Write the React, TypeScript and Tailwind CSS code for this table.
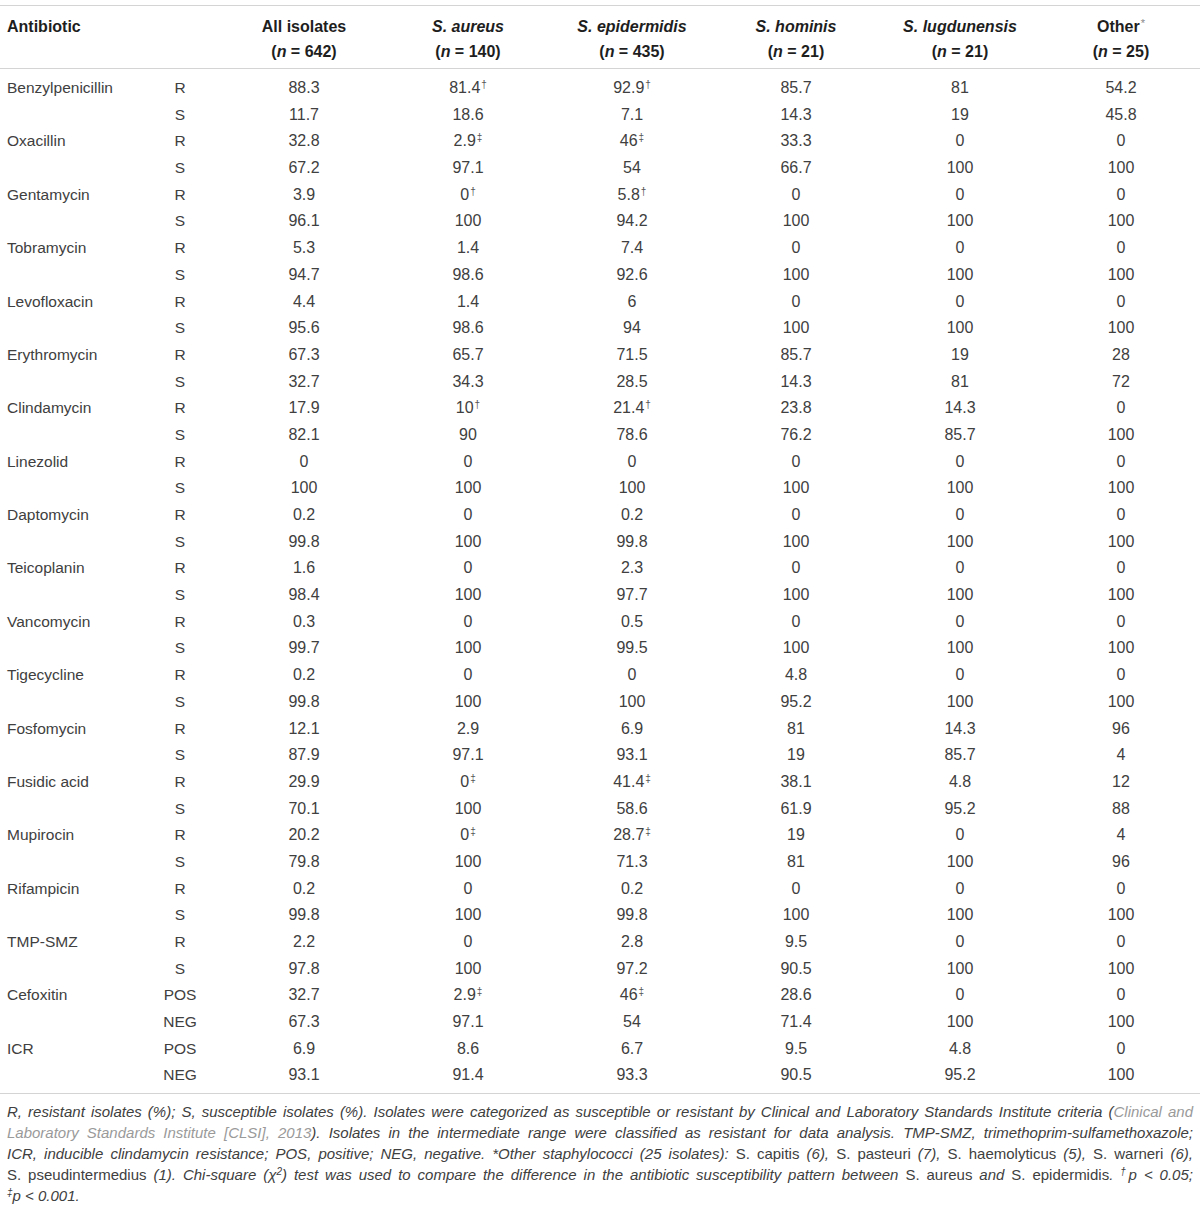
import React from "react";

type Cell = string;

const rows: [string, string, Cell[]][] = [
  ["Benzylpenicillin", "R", ["88.3", "81.4†", "92.9†", "85.7", "81", "54.2"]],
  ["", "S", ["11.7", "18.6", "7.1", "14.3", "19", "45.8"]],
  ["Oxacillin", "R", ["32.8", "2.9‡", "46‡", "33.3", "0", "0"]],
  ["", "S", ["67.2", "97.1", "54", "66.7", "100", "100"]],
  ["Gentamycin", "R", ["3.9", "0†", "5.8†", "0", "0", "0"]],
  ["", "S", ["96.1", "100", "94.2", "100", "100", "100"]],
  ["Tobramycin", "R", ["5.3", "1.4", "7.4", "0", "0", "0"]],
  ["", "S", ["94.7", "98.6", "92.6", "100", "100", "100"]],
  ["Levofloxacin", "R", ["4.4", "1.4", "6", "0", "0", "0"]],
  ["", "S", ["95.6", "98.6", "94", "100", "100", "100"]],
  ["Erythromycin", "R", ["67.3", "65.7", "71.5", "85.7", "19", "28"]],
  ["", "S", ["32.7", "34.3", "28.5", "14.3", "81", "72"]],
  ["Clindamycin", "R", ["17.9", "10†", "21.4†", "23.8", "14.3", "0"]],
  ["", "S", ["82.1", "90", "78.6", "76.2", "85.7", "100"]],
  ["Linezolid", "R", ["0", "0", "0", "0", "0", "0"]],
  ["", "S", ["100", "100", "100", "100", "100", "100"]],
  ["Daptomycin", "R", ["0.2", "0", "0.2", "0", "0", "0"]],
  ["", "S", ["99.8", "100", "99.8", "100", "100", "100"]],
  ["Teicoplanin", "R", ["1.6", "0", "2.3", "0", "0", "0"]],
  ["", "S", ["98.4", "100", "97.7", "100", "100", "100"]],
  ["Vancomycin", "R", ["0.3", "0", "0.5", "0", "0", "0"]],
  ["", "S", ["99.7", "100", "99.5", "100", "100", "100"]],
  ["Tigecycline", "R", ["0.2", "0", "0", "4.8", "0", "0"]],
  ["", "S", ["99.8", "100", "100", "95.2", "100", "100"]],
  ["Fosfomycin", "R", ["12.1", "2.9", "6.9", "81", "14.3", "96"]],
  ["", "S", ["87.9", "97.1", "93.1", "19", "85.7", "4"]],
  ["Fusidic acid", "R", ["29.9", "0‡", "41.4‡", "38.1", "4.8", "12"]],
  ["", "S", ["70.1", "100", "58.6", "61.9", "95.2", "88"]],
  ["Mupirocin", "R", ["20.2", "0‡", "28.7‡", "19", "0", "4"]],
  ["", "S", ["79.8", "100", "71.3", "81", "100", "96"]],
  ["Rifampicin", "R", ["0.2", "0", "0.2", "0", "0", "0"]],
  ["", "S", ["99.8", "100", "99.8", "100", "100", "100"]],
  ["TMP-SMZ", "R", ["2.2", "0", "2.8", "9.5", "0", "0"]],
  ["", "S", ["97.8", "100", "97.2", "90.5", "100", "100"]],
  ["Cefoxitin", "POS", ["32.7", "2.9‡", "46‡", "28.6", "0", "0"]],
  ["", "NEG", ["67.3", "97.1", "54", "71.4", "100", "100"]],
  ["ICR", "POS", ["6.9", "8.6", "6.7", "9.5", "4.8", "0"]],
  ["", "NEG", ["93.1", "91.4", "93.3", "90.5", "95.2", "100"]],
];

const heads: [React.ReactNode, string][] = [
  [<span>All isolates</span>, "642"],
  [<i>S. aureus</i>, "140"],
  [<i>S. epidermidis</i>, "435"],
  [<i>S. hominis</i>, "21"],
  [<i>S. lugdunensis</i>, "21"],
  [
    <span>
      Other<sup className="font-normal text-[#888] text-[11px] ml-[1px]">*</sup>
    </span>,
    "25",
  ],
];

const grid = "grid grid-cols-[138px_84px_164px_164px_164px_164px_164px_1fr]";

const Value = ({ v }: { v: string }) => {
  const mark = v.endsWith("†") || v.endsWith("‡") ? v.slice(-1) : "";
  const num = mark ? v.slice(0, -1) : v;
  return (
    <span>
      {num}
      {mark && <sup className="text-[10px] text-[#555] ml-[1px]">{mark}</sup>}
    </span>
  );
};

export default function App() {
  return (
    <div className="bg-white w-[1200px] pt-[5px] text-[#404040] font-['Liberation_Sans',Arial,sans-serif]">
      <div className="border-t border-[#d4d4d4]" />

      {/* header */}
      <div className={`${grid} pt-[8px] pb-[4px] text-[16px] leading-[25px] font-bold text-[#1e1e1e] border-b border-[#d4d4d4]`}>
        <div className="pl-[7px]">Antibiotic</div>
        <div />
        {heads.map(([label, n], i) => (
          <div key={i} className="text-center">
            <div>{label}</div>
            <div>
              (<i>n</i> = {n})
            </div>
          </div>
        ))}
      </div>

      {/* body */}
      <div className="pt-[6px] pb-[4px] border-b border-[#d4d4d4]">
        {rows.map(([name, kind, vals], i) => (
          <div key={i} className={`${grid} h-[26.7px] leading-[26.7px] items-baseline text-[16px]`}>
            <div className="pl-[7px] whitespace-nowrap text-[15.5px]">{name}</div>
            <div className="text-center text-[15.5px]">{kind}</div>
            {vals.map((v, j) => (
              <div key={j} className="text-center">
                <Value v={v} />
              </div>
            ))}
          </div>
        ))}
      </div>

      {/* footnote */}
      <div className="px-[7px] pt-[7px] text-[15px] leading-[21px] italic text-[#404040]">
        <div className="whitespace-nowrap text-justify [text-align-last:justify]">
          R, resistant isolates (%); S, susceptible isolates (%). Isolates were categorized as susceptible or resistant by Clinical and Laboratory Standards Institute criteria (<span className="text-[#9a9a9a]">Clinical and</span>
        </div>
        <div className="whitespace-nowrap text-justify [text-align-last:justify]">
          <span className="text-[#9a9a9a]">Laboratory Standards Institute [CLSI], 2013</span>). Isolates in the intermediate range were classified as resistant for data analysis. TMP-SMZ, trimethoprim-sulfamethoxazole;
        </div>
        <div className="whitespace-nowrap text-justify [text-align-last:justify]">
          ICR, inducible clindamycin resistance; POS, positive; NEG, negative. *Other staphylococci (25 isolates): <span className="not-italic">S. capitis</span> (6), <span className="not-italic">S. pasteuri</span> (7), <span className="not-italic">S. haemolyticus</span> (5), <span className="not-italic">S. warneri</span> (6),
        </div>
        <div className="whitespace-nowrap text-justify [text-align-last:justify]">
          <span className="not-italic">S. pseudintermedius</span> (1). Chi-square (χ<sup className="text-[10px]">2</sup>) test was used to compare the difference in the antibiotic susceptibility pattern between <span className="not-italic">S. aureus</span> and <span className="not-italic">S. epidermidis</span>. <sup className="text-[10px]">†</sup>p &lt; 0.05;
        </div>
        <div className="whitespace-nowrap">
          <sup className="text-[10px]">‡</sup>p &lt; 0.001.
        </div>
      </div>
    </div>
  );
}
